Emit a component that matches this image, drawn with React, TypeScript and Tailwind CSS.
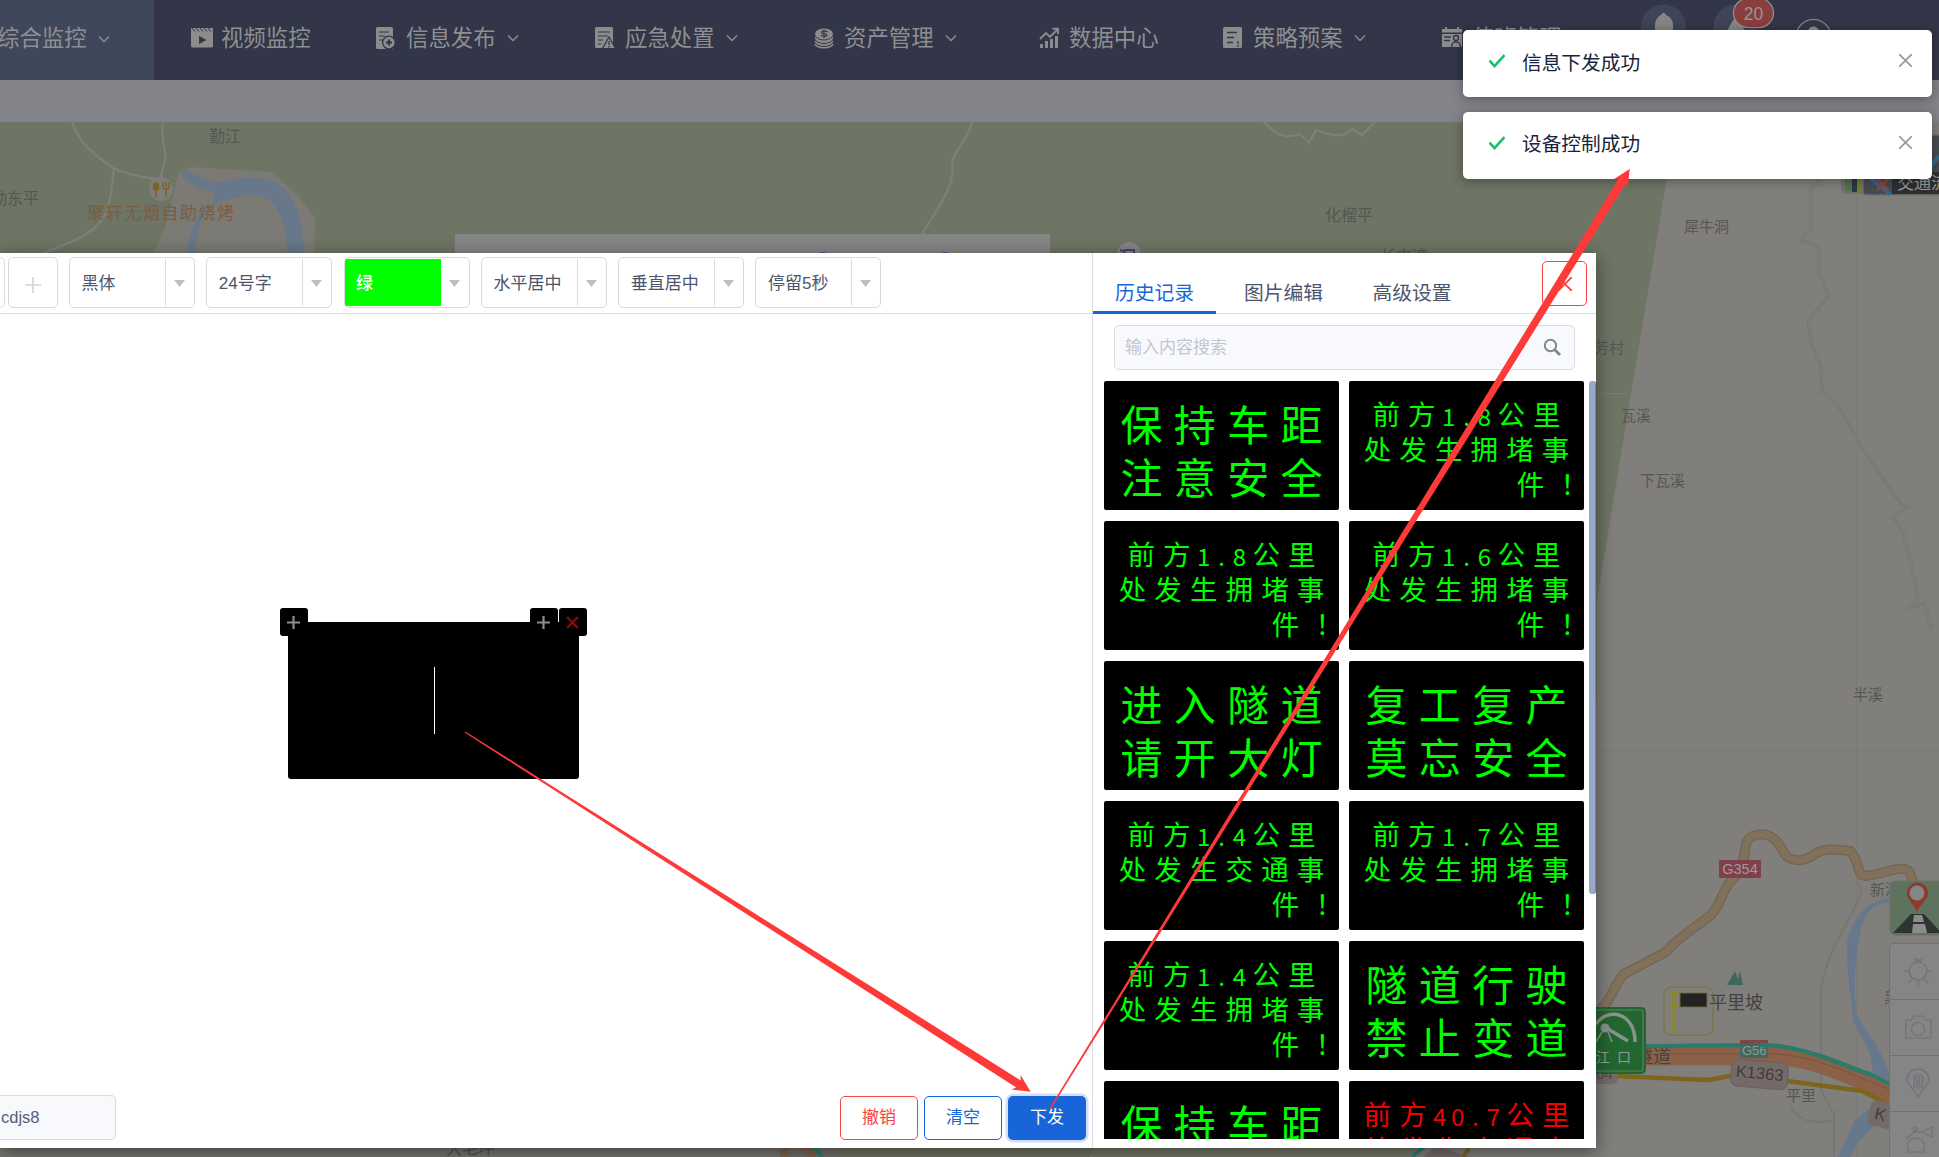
import React from "react";

type NavEntry = { label: string; icon: string; className: string; chevron?: boolean };

const NAV: NavEntry[] = [
  { label: "视频监控", icon: "video", className: "ml-[37px]" },
  { label: "信息发布", icon: "publish", className: "ml-[65px]", chevron: true },
  { label: "应急处置", icon: "alert", className: "ml-[76px]", chevron: true },
  { label: "资产管理", icon: "coins", className: "ml-[76px]", chevron: true },
  { label: "数据中心", icon: "chart", className: "ml-[82px]" },
  { label: "策略预案", icon: "plan", className: "ml-[64px]", chevron: true },
  { label: "值班管理", icon: "duty", className: "ml-[76px]" },
];

const SELECTS = ["黑体", "24号字", "绿", "水平居中", "垂直居中", "停留5秒"];

type Sign = { lines: string[]; big?: boolean; red?: boolean };

const SIGNS: Sign[] = [
  { lines: ["保持车距", "注意安全"], big: true },
  { lines: ["前方1.8公里", "处发生拥堵事", "件！"] },
  { lines: ["前方1.8公里", "处发生拥堵事", "件！"] },
  { lines: ["前方1.6公里", "处发生拥堵事", "件！"] },
  { lines: ["进入隧道", "请开大灯"], big: true },
  { lines: ["复工复产", "莫忘安全"], big: true },
  { lines: ["前方1.4公里", "处发生交通事", "件！"] },
  { lines: ["前方1.7公里", "处发生拥堵事", "件！"] },
  { lines: ["前方1.4公里", "处发生拥堵事", "件！"] },
  { lines: ["隧道行驶", "禁止变道"], big: true },
  { lines: ["保持车距", "注意安全"], big: true },
  { lines: ["前方40.7公里", "处发生交通事", "件！"], red: true },
];

function Chevron() {
  return (
    <svg className="ml-[11px] h-3 w-3 shrink-0" viewBox="0 0 12 12" fill="none" stroke="#8b8b8b" strokeWidth="1.5">
      <path d="M1 3.5 6 8.5 11 3.5" />
    </svg>
  );
}

function NavIcon({ name }: { name: string }) {
  const c = "#8c8c8c";
  const bg = "#323648";
  return (
    <svg className="h-[22px] w-[22px] shrink-0" viewBox="0 0 22 22" fill={c}>
      {name === "video" && (
        <>
          <path d="M0 6h22V19a1.5 1.5 0 0 1-1.5 1.5h-19A1.5 1.5 0 0 1 0 19z" />
          <path d="M0 1h22v5.500H0z" />
          <path d="M1 1l3 3.500M5 1l3 3.500M9 1l3 3.500M13 1l3 3.500M17 1l3 3.500" stroke={bg} strokeWidth="1" />
          <path d="M8 9v8l7.500-4z" fill={bg} />
        </>
      )}
      {name === "publish" && (
        <>
          <path d="M1.500 0h14A1.500 1.500 0 0 1 17 1.500V22H1.500A1.500 1.500 0 0 1 0 20.500v-19A1.500 1.500 0 0 1 1.500 0z" />
          <path d="M3 5h10M3 9h6M3 13h4" stroke={bg} strokeWidth="1.200" />
          <circle cx="13" cy="15.500" r="6.300" stroke={bg} strokeWidth="1.300" />
          <path d="M13 12.500v6M10 15.500h6" stroke={bg} strokeWidth="2" />
        </>
      )}
      {name === "alert" && (
        <>
          <path d="M1.500 0h15A1.500 1.500 0 0 1 18 1.500V21H1.500A1.500 1.500 0 0 1 0 19.500v-18A1.500 1.500 0 0 1 1.500 0z" />
          <path d="M3 5h12M3 9h10M3 13h5M3 17h3" stroke={bg} strokeWidth="1.200" />
          <path d="M14 10l6.500 11.500h-13z" stroke={bg} strokeWidth="1.200" />
          <path d="M14 14v4M14 19v1.500" stroke={bg} strokeWidth="1.200" />
        </>
      )}
      {name === "coins" && (
        <>
          <ellipse cx="10" cy="17" rx="9.500" ry="4.500" />
          <ellipse cx="10" cy="14.500" rx="9.500" ry="5" stroke={bg} />
          <ellipse cx="10" cy="11" rx="9.500" ry="5.500" stroke={bg} />
          <ellipse cx="10" cy="7" rx="9.500" ry="6" stroke={bg} />
          <path d="M13.500 5c-2-1.600-6-1.300-6 .4 0 1.800 5.500.9 5.500 2.700 0 1.800-4.500 1.700-6 .1M10 3v8" stroke={bg} strokeWidth="1.200" fill="none" />
        </>
      )}
      {name === "chart" && (
        <>
          <path d="M1 17h3v4H1zM6 14h3v7H6zM11 12h3v9h-3zM16 9h3v12h-3z" />
          <path d="M1 12l6-6 4 4 8-8M13.500 1.800H19v5.500" stroke={c} strokeWidth="1.900" fill="none" />
        </>
      )}
      {name === "plan" && (
        <>
          <rect x="0" y="0" width="19" height="21" rx="1.500" />
          <path d="M4 5.500h10M4 10.500h7M4 15.500h6M15 14v3M15 18v2" stroke={bg} strokeWidth="1.300" />
        </>
      )}
      {name === "duty" && (
        <>
          <path d="M0 7h20v13H0zM0 2h20v3.500H0zM3 0h2v3H3zM15 0h2v3h-2z" />
          <path d="M2 10h7M2 13.500h6" stroke={bg} strokeWidth="1.300" />
          <circle cx="14" cy="11" r="2.500" fill="none" stroke={bg} strokeWidth="1.300" />
          <path d="M9.500 20c0-7 9-7 9 0" fill="none" stroke={bg} strokeWidth="1.300" />
        </>
      )}
    </svg>
  );
}

function Header() {
  return (
    <header className="relative flex h-20 items-center overflow-hidden bg-[#323648] text-[22.4px] text-[#8f8f90]">
      <div className="flex h-20 w-[154px] shrink-0 items-center bg-[#3f475b] pb-[3px]">
        <span className="-ml-[3px] w-[90px] whitespace-nowrap">综合监控</span>
        <Chevron />
      </div>
      {NAV.map((n) => (
        <div key={n.label} className={"flex shrink-0 items-center pb-[3px] " + n.className}>
          <NavIcon name={n.icon} />
          <span className="ml-2 w-[90px] whitespace-nowrap">{n.label}</span>
          {n.chevron && <Chevron />}
        </div>
      ))}
      <svg className="absolute top-0 right-0 h-20 w-[299px]" viewBox="0 0 299 80">
        <circle cx="23.500" cy="27" r="22.500" fill="#3f4456" />
        <path d="M15 33V25c0-6 4-9 6-10 1.500-3 4-3 5 0 3 1 7 4 7 10v8z" fill="#858585" />
        <circle cx="96" cy="27" r="22.500" fill="#3f4456" />
        <path d="M84 36 96 15l12 21z" fill="#858585" />
        <rect x="93.500" y="-1.500" width="40" height="29" rx="14.500" fill="#8a3d3d" stroke="#8f8f8f" strokeWidth="1.200" />
        <circle cx="173.500" cy="37" r="17.500" fill="none" stroke="#8f8f8f" strokeWidth="1.200" />
        <circle cx="173.500" cy="32" r="5.500" fill="#8f8f8f" />
        <text x="113.500" y="19.500" textAnchor="middle" fontSize="17.500" fill="#979797">20</text>
        <text x="212" y="43" fontSize="18" fill="#8f8f8f">cdjs8</text>
      </svg>
    </header>
  );
}

function MapCanvas() {
  return (
    <svg className="block h-[1035px] w-full" viewBox="0 122 1939 1035" fontSize="15">
      <rect x="0" y="122" width="1939" height="1035" fill="#807f7c" />
      <path d="M0 122H1676L1597 600V700H0z" fill="#6e7564" />
      <path d="M178 174 190 167 273 172 298 196 315 218 314 262H150L166 225z" fill="#7b7a74" />
      <path d="M183 170C200 175 213 185 225 182 245 176 262 175 278 184 298 196 304 225 304 262H289C287 235 283 210 268 199 250 191 235 198 220 202 203 210 196 225 194 262H186C188 230 195 217 206 209 220 196 218 194 200 188 190 183 184 178 180 174z" fill="#68788a" />
      <g fill="none" stroke="#7e8079" strokeWidth="2.200">
        <path d="M72 122C80 145 95 155 113 168 130 176 145 177 160 180M163 122C160 140 167 150 165 160L160 180M114 168C112 190 110 205 106 213 95 237 65 243 40 255M972 122C968 140 955 150 952 162 954 178 950 187 940 205L921 236" />
        <path d="M1264 122C1275 135 1285 139 1300 134L1309 143 1316 130C1328 134 1335 137 1345 134L1353 129 1362 135 1375 122" />
      </g>
      <g fill="none" strokeLinejoin="round">
        <path d="M1820 180 1811 190V228L1800 240 1819 246V275L1829 295 1808 322 1812 345 1821 365 1822 390 1842 412 1862 448 1884 480 1902 505 1909 507 1893 517 1904 535 1917 590V600L1906 610 1924 603 1932 630" stroke="#767573" strokeWidth="3" />
        <path d="M1820 180 1811 190V228L1800 240 1819 246V275L1829 295 1808 322 1812 345 1821 365 1822 390 1842 412 1862 448 1884 480 1902 505 1909 507 1893 517 1904 535 1917 590V600L1906 610 1924 603 1932 630" stroke="#807f7c" strokeWidth="1.200" />
      </g>
      <path d="M1856.500 122V1157M1597 393.500H1939M1597 751.500H1939M1597 1110.500H1939" stroke="#7a7b78" strokeWidth="1" />

      <path d="M1590 1014C1612 1008 1612 985 1624 974L1666 952C1680 935 1700 925 1712 914 1725 898 1720 890 1737 875 1750 855 1740 842 1753 836 1768 830 1778 840 1784 853 1790 862 1803 862 1812 856 1825 846 1840 850 1850 851 1860 860 1856 875 1865 876 1885 874 1895 867 1904 869 1912 870 1912 880 1914 890" fill="none" stroke="#736551" strokeWidth="10" />
      <path d="M1590 1014C1612 1008 1612 985 1624 974L1666 952C1680 935 1700 925 1712 914 1725 898 1720 890 1737 875 1750 855 1740 842 1753 836 1768 830 1778 840 1784 853 1790 862 1803 862 1812 856 1825 846 1840 850 1850 851 1860 860 1856 875 1865 876 1885 874 1895 867 1904 869 1912 870 1912 880 1914 890" fill="none" stroke="#81715b" strokeWidth="7.500" />
      <path d="M1857 880 1862 892C1845 930 1822 960 1821 995V1090L1834 1115V1157M1790 1105C1800 1125 1815 1122 1834 1121" fill="none" stroke="#777674" strokeWidth="2" />
      <path d="M1895 898C1868 898 1855 915 1847 940 1846 975 1852 1000 1853 1020 1862 1040 1872 1050 1872 1068L1884 1100H1892V1085C1882 1045 1870 1040 1857 1015 1852 985 1856 950 1862 925 1870 905 1880 903 1895 902zM1838 1157 1855 1120 1868 1110H1888L1876 1125 1860 1140 1850 1157z" fill="#68788c" />
      <path d="M1640 1056H1780C1830 1060 1860 1082 1895 1094" fill="none" stroke="#8c6148" strokeWidth="19" />
      <path d="M1660 1054H1780C1830 1060 1860 1080 1895 1091" fill="none" stroke="#765343" strokeWidth="1" />
      <path d="M1645 1046 1760 1045C1810 1045 1850 1070 1870 1074L1895 1087" fill="none" stroke="#297c6a" strokeWidth="4" />
      <path d="M1615 1076 1708 1080 1730 1076H1750L1862 1091 1895 1108" fill="none" stroke="#7d651e" strokeWidth="4.500" />

      <rect x="1719" y="860" width="42" height="18" rx="1" fill="#80404a" />
      <text x="1740" y="874" textAnchor="middle" fontSize="14.500" fill="#a29a98">G354</text>
      <rect x="1740" y="1040" width="28" height="18" fill="#42695f" />
      <rect x="1740" y="1040" width="28" height="4" fill="#7e4743" />
      <text x="1742" y="1055" fontSize="13" fill="#8b9a95">G56</text>
      <path d="M1760 1045C1810 1045 1850 1070 1870 1074" fill="none" stroke="#297c6a" strokeWidth="4" />
      <g transform="rotate(5 1760 1075)">
        <rect x="1731" y="1061" width="57" height="27" rx="7" fill="#766a68" stroke="#6b605f" />
        <text x="1759.500" y="1079" textAnchor="middle" fontSize="16.500" fill="#3f3d3d">K1363</text>
      </g>
      <rect x="1580" y="1062" width="38" height="22" rx="6" fill="#766a68" />
      <text x="1596" y="1079" fontSize="15" fill="#4c4a4a">64</text>
      <g transform="rotate(14 1880 1113)">
        <rect x="1869" y="1101" width="40" height="26" rx="7" fill="#766a68" />
        <text x="1875" y="1120" fontSize="17" fill="#3f3d3d">K</text>
      </g>

      <text x="1635" y="1063" fontSize="18" fill="#454440">隧道</text>
      <rect x="1550" y="1007.500" width="95.500" height="66" rx="4" fill="#22672f" stroke="#22672f" />
      <rect x="1552" y="1010" width="91" height="61" rx="2" fill="#22672f" stroke="#5f8062" strokeWidth="1.200" />
      <path d="M1596 1024C1608 1007 1635 1012 1635 1042M1608 1029 1628 1041" fill="none" stroke="#8b918b" strokeWidth="3.500" />
      <circle cx="1605" cy="1028" r="4.500" fill="#8b918b" />
      <path d="M1602 1032 1596 1042M1608 1032 1612 1042" stroke="#8b918b" strokeWidth="1.500" />
      <text x="1596" y="1062" fontSize="14" fill="#959a95" letterSpacing="7">江口</text>

      <rect x="1664" y="987" width="49" height="48" rx="7" fill="none" stroke="#77753a" strokeWidth="1.200" />
      <path d="M1673.500 990V1031M1670 994H1680M1670 1006H1680M1670 1030.500H1678" stroke="#8a8634" strokeWidth="2.800" />
      <rect x="1680" y="993" width="27" height="14" fill="#222" stroke="#6a6835" />
      <path d="M1727 985 1735 971 1738 979 1740 971 1743 985z" fill="#3d685a" />
      <text x="1709" y="1009" fontSize="18" fill="#44433f">平里坡</text>

      <g fill="#565653">
        <text x="209" y="142" fontSize="16">勤江</text>
        <text x="-9" y="204" fontSize="16">勤东平</text>
        <text x="1325" y="221" fontSize="16">化榴平</text>
        <text x="1380" y="262" fontSize="16">长古湾</text>
        <text x="1684" y="232">犀牛洞</text>
        <text x="1594" y="353">芳村</text>
        <text x="1621" y="421">瓦溪</text>
        <text x="1640" y="486">下瓦溪</text>
        <text x="1853" y="700">半溪</text>
        <text x="1870" y="895">新溪</text>
        <text x="1786" y="1101">平里</text>
        <text x="1884" y="1003">黑</text>
      </g>
      <circle cx="161" cy="189" r="12" fill="#7d7d79" />
      <ellipse cx="156" cy="186.500" rx="3.300" ry="4.500" fill="#7e6128" />
      <path d="M156 190v7M166 188v9M163 182v4q0 3 3 3t3-3v-4M166 182v5" stroke="#7e6128" strokeWidth="1.500" fill="none" />
      <text x="87" y="219" fontSize="17" fill="#7a5d42" textLength="147">聚轩无烟自助烧烤</text>
      <circle cx="1129" cy="254" r="12" fill="#83838a" />
      <path d="M1120 250l4 1 1 5h9v-6h-10" fill="none" stroke="#484270" strokeWidth="2" />

      <rect x="455" y="234" width="595" height="40" fill="#868686" />
      <circle cx="823" cy="262" r="10" fill="#315b96" />
      <circle cx="945" cy="262" r="10" fill="#315b96" />

      <rect x="0" y="1140" width="780" height="17" fill="#767572" />
      <path d="M780 1140H850L862 1157H780z" fill="#6f706a" />
      <path d="M795 1140 815 1157M782 1148 787 1157" stroke="#82614b" strokeWidth="9" />
      <path d="M810 1143 822 1157" stroke="#2d7f70" strokeWidth="4" />
      <path d="M825 1140H1100L1090 1157H840z" fill="#6d725f" />
      <path d="M1092 1140H1425L1410 1157H1092z" fill="#747766" />
      <path d="M1412 1157 1428 1143" stroke="#2d7f70" strokeWidth="4" />
      <path d="M1424 1157 1436 1146 1470 1157z" fill="#766a68" />
      <path d="M1463 1157 1469 1148" stroke="#7d651e" strokeWidth="4" />
      <text x="446" y="1154" fontSize="16" fill="#52524f">大毛坪</text>

      <rect x="1841" y="135" width="110" height="59" rx="5" fill="#6f716f" />
      <path d="M1845 150h7v41h-7z" fill="#53714e" />
      <path d="M1852 150h5v42h-5z" fill="#263a45" />
      <path d="M1857 150h5v43h-5z" fill="#73803a" />
      <rect x="1863" y="135" width="80" height="60" rx="3" fill="#474b50" stroke="#6e7070" strokeWidth="1.500" />
      <path d="M1870 178 1890 194M1926 172 1939 156" stroke="#2b6b8d" strokeWidth="4" />
      <path d="M1877 179 1888 190M1888 179 1877 190" stroke="#8b4540" strokeWidth="3" />
      <rect x="1892" y="172" width="50" height="22" fill="#2e2f30" />
      <text x="1897" y="189" fontSize="17" fill="#999">交通流</text>

      <rect x="1890" y="881" width="60" height="54" rx="5" fill="#5e725d" stroke="#6c756b" />
      <path d="M1893 933 1911 914H1924L1950 942V933z" fill="#303336" />
      <path d="M1914 915h8l2 7h-11zM1913 924h12l2 9h-15z" fill="#8a8d8a" />
      <path d="M1917 912C1913 903 1907 900 1907 893a10.500 10.500 0 0 1 21 0C1928 900 1921 903 1917 912z" fill="#8d3b2c" />
      <circle cx="1917" cy="893" r="7.500" fill="#858685" />
      <rect x="1889.500" y="943.500" width="60" height="230" rx="4" fill="#858585" stroke="#6d7077" />
      <path d="M1890 999.500h60M1890 1055.500h60M1890 1111.500h60" stroke="#6d7077" />
      <g fill="none" stroke="#6d7179" strokeWidth="1.200">
        <circle cx="1918" cy="971" r="9" />
        <path d="M1904 971h5M1927 971h5M1908 983l4-4M1928 983l-4-4M1918 981v5M1914 962l8-3M1914 958l8 4" />
        <path d="M1906 1020h5l3-4h9l3 4h5v18h-25z" />
        <circle cx="1918" cy="1029" r="6.500" />
        <path d="M1918 1097C1912 1087 1907 1083 1907 1080a11 11 0 0 1 22 0C1929 1083 1924 1087 1918 1097z" />
        <rect x="1914" y="1075" width="8.500" height="13" rx="2" />
        <circle cx="1918" cy="1079" r="1.800" />
        <circle cx="1918" cy="1084" r="1.800" />
        <path d="M1906 1139 1914 1132H1923L1932 1127V1137L1923 1133M1908 1152V1145Q1908 1138 1915 1138 1924 1138 1924 1145V1152z" />
        <circle cx="1915" cy="1129" r="2" />
      </g>
    </svg>
  );
}

function Select({ label }: { label: string }) {
  const green = label === "绿";
  return (
    <div className="flex h-[51px] w-[126px] shrink-0 items-stretch overflow-hidden rounded-[5px] border border-[#d9dadd] py-px text-[17px] text-[#4d556e]">
      <div
        className={
          "flex w-[96px] shrink-0 items-center border-r pt-[2px] pl-[11.500px] " +
          (green ? "border-[#00ff00] bg-[#00ff00] font-medium text-white" : "border-[#dcdde0]")
        }
      >
        {label}
      </div>
      <div className="flex flex-1 items-center justify-center pt-px pr-px">
        <svg className="h-[7px] w-[11px]" viewBox="0 0 11 7">
          <path d="M0 0h11L5.500 7z" fill="#bcbfc7" />
        </svg>
      </div>
    </div>
  );
}

function glyphClass(ch: string, big?: boolean) {
  if (big) return "w-[53.4px]";
  if (/[0-9.]/.test(ch)) return "w-[17.9px] font-['Noto_Sans_CJK_SC'] text-[24px]";
  if (ch === "！") return "w-[35.6px] translate-x-[8px]";
  return "w-[35.6px]";
}

function SignCard({ sign }: { sign: Sign }) {
  return (
    <div
      className={
        "flex h-[129px] flex-col overflow-hidden rounded-[2px] bg-black " +
        (sign.red ? "text-[#f00000] " : "text-[#00ff00] ") +
        (sign.big ? "pt-[19px]" : "pt-[16.500px]")
      }
    >
      {sign.lines.map((line, i) => (
        <div
          key={i}
          className={
            "flex shrink-0 items-center " +
            (i === 2 ? "justify-end " : "justify-center ") +
            (sign.big ? "h-[53.3px] text-[42px] leading-[53px]" : "h-[35.3px] text-[27.500px] leading-[35px]")
          }
        >
          {line.split("").map((ch, j) => (
            <span key={j} className={"shrink-0 text-center " + glyphClass(ch, sign.big)}>
              {ch}
            </span>
          ))}
        </div>
      ))}
    </div>
  );
}

function BoardButton({ kind }: { kind: "add" | "remove" }) {
  return (
    <div className="flex h-7 w-7 items-center justify-center rounded-[3px] bg-black pr-px">
      <svg className="h-[13px] w-[13px]" viewBox="0 0 13 13" strokeWidth="2.200">
        {kind === "add" ? (
          <path d="M6.500 0v13M0 6.500h13" stroke="#8d8d8d" />
        ) : (
          <path d="M1 1l11 11M12 1 1 12" stroke="#a80000" />
        )}
      </svg>
    </div>
  );
}

function Editor() {
  return (
    <section className="flex w-[1092px] shrink-0 flex-col">
      <div className="flex h-[61px] items-start border-b border-[#dcdde0] pt-1">
        <div className="-ml-2 h-[51px] w-[13px] rounded-[5px] border border-[#dedfe2]" />
        <div className="ml-[3px] flex h-[51px] w-[50px] items-center justify-center rounded-[5px] border border-[#d9dadd]">
          <svg className="mt-[5px] h-4 w-4" viewBox="0 0 16 16" stroke="#d2d3d6" strokeWidth="1.600">
            <path d="M8 0v16M0 8h16" />
          </svg>
        </div>
        <div className="ml-[11px] flex gap-[11.300px]">
          {SELECTS.map((s) => (
            <Select key={s} label={s} />
          ))}
        </div>
      </div>
      <div className="flex-1 pt-[308px] pl-[288px]">
        <div className="relative flex h-[157px] w-[291px] items-center justify-center rounded-[3px] bg-black">
          <div className="ml-[2px] h-[67px] w-px bg-white" />
          <div className="absolute -top-[14px] -left-2">
            <BoardButton kind="add" />
          </div>
          <div className="absolute -top-[14px] -right-2 flex gap-px">
            <BoardButton kind="add" />
            <BoardButton kind="remove" />
          </div>
        </div>
      </div>
      <div className="flex h-[53px] items-start justify-between pr-[6px]">
        <div className="flex h-[45px] w-[116px] items-center rounded-r-[5px] border border-l-0 border-[#dcdde3] bg-[#f8f9fd] pl-px text-[16.500px] text-[#555d76]">
          cdjs8
        </div>
        <div className="mt-px flex gap-[6px] text-[17px]">
          <button className="h-11 w-[78px] rounded-[5px] border border-[#fa4444] text-[#fa4444]">撤销</button>
          <button className="h-11 w-[78px] rounded-[5px] border border-[#1765d8] text-[#1765d8]">清空</button>
          <button className="h-11 w-[78px] rounded-[5px] bg-[#1765d8] text-white ring-[2.500px] ring-[#d1e0f7]">下发</button>
        </div>
      </div>
    </section>
  );
}

function History() {
  return (
    <section className="flex min-w-0 flex-1 flex-col border-l border-[#dcdde0]">
      <div className="flex h-[61px] shrink-0 items-stretch border-b border-[#dcdde0] text-[19.800px] text-[#4d556e]">
        <div className="-mb-px flex w-[123px] items-center justify-center border-b-[3px] border-[#1765d8] pt-[23px] text-[#1765d8]">
          历史记录
        </div>
        <div className="flex w-[135px] items-center justify-center pt-[21px]">图片编辑</div>
        <div className="flex w-[122px] items-center justify-center pt-[21px]">高级设置</div>
        <button className="mt-2 ml-[69px] flex h-[45px] w-[45px] items-center justify-center rounded-[5px] border border-[#fa4444]">
          <svg className="h-[14px] w-[14px]" viewBox="0 0 14 14" stroke="#fa4444" strokeWidth="1.900">
            <path d="M0 0l14 14M14 0 0 14" />
          </svg>
        </button>
      </div>
      <div className="mt-[11px] ml-[21px] flex h-[45px] w-[461px] shrink-0 items-center justify-between rounded-[5px] border border-[#dcdde3] bg-[#f8f9fd] pr-[13px] pl-[10px] text-[17px] text-[#c3c6ce]">
        输入内容搜索
        <svg className="mb-[2px] h-[18px] w-[18px]" viewBox="0 0 18 18" fill="none" stroke="#808794">
          <circle cx="7.500" cy="7.500" r="5.700" strokeWidth="2" />
          <path d="M11.500 11.500 17 17" strokeWidth="2.800" />
        </svg>
      </div>
      <div className="mt-[11px] flex h-[758px] overflow-hidden">
        <div className="ml-[11px] grid h-fit w-[480px] grid-cols-2 gap-x-[10px] gap-y-[11px]">
          {SIGNS.map((s, i) => (
            <SignCard key={i} sign={s} />
          ))}
        </div>
        <div className="ml-[5px] h-[513px] w-[7px] rounded-[3px] border-r border-[#6f83a5] bg-[#97a9c9]" />
      </div>
    </section>
  );
}

function Toast({ text }: { text: string }) {
  return (
    <div className="flex h-[67px] w-[469px] items-center justify-between rounded-[5px] bg-white pr-5 pl-[26px] shadow-[0_2px_12px_rgba(0,0,0,0.35)]">
      <div className="flex items-center">
        <svg className="mb-[5px] h-4 w-4" viewBox="0 0 16 16" fill="none" stroke="#19be6b" strokeWidth="2.600">
          <path d="M0.500 7.500 5.500 13 15.500 2" />
        </svg>
        <span className="mb-[2px] ml-[17px] text-[19.700px] leading-6 text-[#17233d]">{text}</span>
      </div>
      <svg className="mb-[6px] h-[13px] w-[13px]" viewBox="0 0 13 13" stroke="#999" strokeWidth="1.700">
        <path d="M0 0l13 13M13 0 0 13" />
      </svg>
    </div>
  );
}

function arrowPoints(x1: number, y1: number, x2: number, y2: number, tail: number) {
  const len = Math.hypot(x2 - x1, y2 - y1);
  const ux = (x2 - x1) / len;
  const uy = (y2 - y1) / len;
  const at = (back: number, side: number) =>
    `${(x2 - ux * back - uy * side).toFixed(1)},${(y2 - uy * back + ux * side).toFixed(1)}`;
  return [at(len, tail), at(14.5, 4.2), at(17.5, 8.5), at(0, 0), at(17.5, -8.5), at(14.5, -4.2), at(len, -tail)].join(" ");
}

export default function App() {
  return (
    <div className="relative h-[1157px] w-[1939px] overflow-hidden bg-[#838489] font-['Liberation_Sans','Noto_Sans_CJK_SC',sans-serif]">
      <Header />
      <div className="h-[42px] bg-[#838489]" />
      <MapCanvas />
      <div className="absolute top-[253px] left-0 flex h-[895px] w-[1596px] bg-white shadow-[0_4px_18px_rgba(0,0,0,0.45)]">
        <Editor />
        <History />
      </div>
      <div className="absolute top-[30px] right-[7px] flex flex-col gap-[14.500px]">
        <Toast text="信息下发成功" />
        <Toast text="设备控制成功" />
      </div>
      <svg className="pointer-events-none absolute inset-0 h-full w-full" viewBox="0 0 1939 1157" fill="#fd3a38">
        <polygon points={arrowPoints(465, 732, 1030.7, 1091.7, 0.6)} />
        <polygon points={arrowPoints(1050, 1109, 1629.7, 169, 0.7)} />
      </svg>
    </div>
  );
}
